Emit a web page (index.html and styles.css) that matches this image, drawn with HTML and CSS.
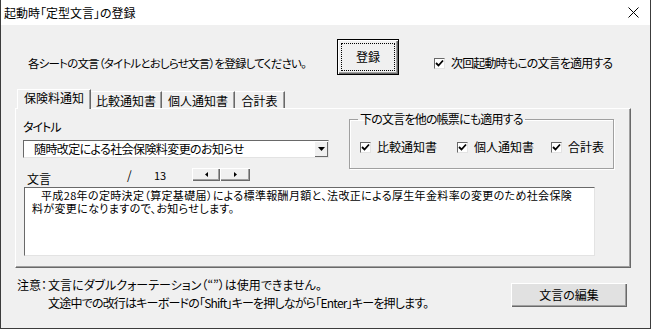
FILE: index.html
```html
<!DOCTYPE html>
<html lang="ja">
<head>
    <meta charset="UTF-8">
    <title>起動時「定型文言」の登録</title>
    <link rel="stylesheet" href="styles.css">
</head>
<body>

<div class="window">
    <div class="titlebar">
        <span class="title">起動時「定型文言」の登録</span>
        <svg class="close" width="11" height="11" viewBox="0 0 11 11">
            <path d="M0.5 0.5 L10.5 10.5 M10.5 0.5 L0.5 10.5" stroke="#000" stroke-width="1" fill="none"/>
        </svg>
    </div>

    <div class="client">
        <div class="intro-row">
            <span class="intro">各シートの文言（タイトルとおしらせ文言）を登録してください。</span>
            <button class="btn default"><span class="focus">登録</span></button>
            <label class="check top-check"><span class="cb"><svg width="9" height="9" viewBox="0 0 9 9"><path d="M1 4 L3.5 6.5 L8 1.5" stroke="#000" stroke-width="1.8" fill="none"/></svg></span>次回起動時もこの文言を適用する</label>
        </div>

        <div class="tabstrip">
            <span class="tab active t1">保険料通知</span>
            <span class="tab t2">比較通知書</span>
            <span class="tab t3">個人通知書</span>
            <span class="tab t4">合計表</span>
        </div>

        <div class="panel">
            <div class="panel-top">
                <div class="title-col">
                    <div class="label">タイトル</div>
                    <div class="combo">
                        <span class="combo-text">随時改定による社会保険料変更のお知らせ</span>
                        <span class="combo-btn"><svg width="7" height="4" viewBox="0 0 7 4"><path d="M0 0 H7 L3.5 4 Z" fill="#000"/></svg></span>
                    </div>
                </div>
                <fieldset class="group">
                    <legend>下の文言を他の帳票にも適用する</legend>
                    <div class="group-row">
                        <label class="check g1"><span class="cb"><svg width="9" height="9" viewBox="0 0 9 9"><path d="M1 4 L3.5 6.5 L8 1.5" stroke="#000" stroke-width="1.8" fill="none"/></svg></span>比較通知書</label>
                        <label class="check g2"><span class="cb"><svg width="9" height="9" viewBox="0 0 9 9"><path d="M1 4 L3.5 6.5 L8 1.5" stroke="#000" stroke-width="1.8" fill="none"/></svg></span>個人通知書</label>
                        <label class="check g3"><span class="cb"><svg width="9" height="9" viewBox="0 0 9 9"><path d="M1 4 L3.5 6.5 L8 1.5" stroke="#000" stroke-width="1.8" fill="none"/></svg></span>合計表</label>
                    </div>
                </fieldset>
            </div>

            <div class="text-head">
                <span class="label bun">文言</span>
                <span class="slash">/</span>
                <span class="count">13</span>
                <span class="spin"><svg width="3" height="5" viewBox="0 0 3 5"><path d="M3 0 V5 L0 2.5 Z" fill="#000"/></svg></span>
                <span class="spin"><svg width="3" height="5" viewBox="0 0 3 5"><path d="M0 0 V5 L3 2.5 Z" fill="#000"/></svg></span>
            </div>

            <div class="textbox">平成28年の定時決定（算定基礎届）による標準報酬月額と、法改正による厚生年金料率の変更のため社会保険<br>料が変更になりますので、お知らせします。</div>
        </div>

        <div class="notes-row">
            <div class="note">
                <span class="note-head">注意：</span>
                <div class="note-lines">
                    <div>文言にダブルクォーテーション（“”）は使用できません。</div>
                    <div class="tight">文途中での改行はキーボードの「Shift」キーを押しながら「Enter」キーを押します。</div>
                </div>
            </div>
            <button class="btn edit">文言の編集</button>
        </div>
    </div>
</div>

</body>
</html>
```

FILE: styles.css
```css
body {
    margin: 0;
    background: #fff;
    font-family: "Noto Sans CJK JP", sans-serif;
    font-size: 12px;
    line-height: 14px;
    color: #000;
    font-feature-settings: "palt";
}
.window {
    width: 651px;
    height: 329px;
    box-sizing: border-box;
    border: 1px solid #3c3c3c;
    border-top: none;
    background: #f0f0f0;
    display: flex;
    flex-direction: column;
}
.titlebar {
    height: 25px;
    background: #fff;
    display: flex;
    align-items: center;
    justify-content: space-between;
    padding-left: 3px;
}
.close {
    margin-right: 11px;
}
.client {
    display: flex;
    flex-direction: column;
    flex: 1;
}

/* top row */
.intro-row {
    height: 64px;
    box-sizing: border-box;
    padding-top: 14px;
    display: flex;
    align-items: flex-start;
}
.intro {
    margin-left: 27px;
    margin-top: 17px;
    width: 309px;
    white-space: nowrap;
    font-size: 11.5px;
    letter-spacing: -0.8px;
}
.btn {
    font: inherit;
    color: #000;
    background: #e1e1e1;
    border: none;
    padding: 0;
    box-shadow: inset 1px 1px 0 #fff, inset -1px -1px 0 #696969, inset -2px -2px 0 #a0a0a0;
    display: flex;
    align-items: center;
    justify-content: center;
}
.default {
    width: 62px;
    height: 36px;
    background: #f0f0f0;
    border: 1px solid #000;
    padding: 3px;
}
.focus {
    flex: 1;
    align-self: stretch;
    border: 1px dotted #000;
    display: flex;
    align-items: center;
    justify-content: center;
}
.check {
    display: flex;
    align-items: center;
    white-space: nowrap;
}
.cb {
    width: 11px;
    height: 11px;
    box-sizing: border-box;
    background: #fff;
    border-top: 1px solid #696969;
    border-left: 1px solid #696969;
    border-right: 1px solid #e3e3e3;
    border-bottom: 1px solid #e3e3e3;
    display: flex;
    align-items: center;
    justify-content: center;
    margin-right: 6px;
}
.top-check {
    margin-left: 35px;
    margin-top: 17px;
    letter-spacing: -0.85px;
}

/* tabs */
.tabstrip {
    display: flex;
    align-items: flex-end;
    height: 19px;
    margin-left: 16px;
}
.tab {
    height: 17px;
    box-sizing: border-box;
    display: flex;
    align-items: center;
    justify-content: center;
    border-top: 1px solid #fff;
    border-left: 1px solid #fff;
    border-right: 1px solid #696969;
    box-shadow: inset -1px 0 0 #a0a0a0;
    padding-top: 2px;
}
.tab.active {
    height: 20px;
    margin-bottom: -1px;
    background: #f0f0f0;
    position: relative;
    z-index: 1;
    padding-top: 0;
    padding-bottom: 3px;
}
.t1 { width: 74px; }
.t2 { width: 71px; border-left: none; }
.t3 { width: 73px; border-left: none; }
.t4 { width: 50px; border-left: none; }

.panel {
    margin-left: 14px;
    width: 616px;
    height: 160px;
    box-sizing: border-box;
    border-top: 1px solid #fff;
    border-left: 1px solid #fff;
    border-right: 1px solid #696969;
    border-bottom: 1px solid #696969;
    box-shadow: inset -1px -1px 0 #a0a0a0;
    display: flex;
    flex-direction: column;
}
.panel-top {
    display: flex;
    align-items: flex-start;
    margin-top: 3px;
}
.title-col {
    margin-left: 7px;
    margin-top: 8px;
    width: 306px;
}
.title-col .label {
    letter-spacing: -1px;
}
.combo {
    margin-top: 6px;
    height: 18px;
    box-sizing: border-box;
    background: #fff;
    border-top: 1px solid #696969;
    border-left: 1px solid #696969;
    border-right: 1px solid #e3e3e3;
    border-bottom: 1px solid #e3e3e3;
    display: flex;
    align-items: center;
}
.combo-text {
    flex: 1;
    padding-left: 10px;
    white-space: nowrap;
    letter-spacing: -0.6px;
}
.combo-btn {
    width: 14px;
    height: 16px;
    box-sizing: border-box;
    background: #f0f0f0;
    box-shadow: inset 1px 1px 0 #fff, inset -1px -1px 0 #696969;
    display: flex;
    align-items: center;
    justify-content: center;
}
.group {
    margin: 0 0 0 20px;
    width: 265px;
    height: 57px;
    box-sizing: border-box;
    padding: 0 8px;
    border: 1px solid #a0a0a0;
    box-shadow: 1px 1px 0 #fff, inset 1px 1px 0 #fff;
}
.group legend {
    padding: 0 2px;
    line-height: 14px;
    letter-spacing: -0.8px;
}
.group-row {
    display: flex;
    margin-top: 14px;
    margin-left: 2px;
}
.g1 { width: 97px; }
.g2 { width: 94px; }

.text-head {
    display: flex;
    align-items: flex-start;
    margin-top: -1px;
    height: 18px;
}
.bun {
    margin-left: 11px;
    margin-top: 4px;
    width: 100px;
}
.slash {
    width: 27px;
}
.count {
    width: 38px;
    font-size: 11px;
}
.spin {
    width: 28px;
    height: 13px;
    box-sizing: border-box;
    background: #f0f0f0;
    box-shadow: inset 1px 1px 0 #fff, inset -1px -1px 0 #696969, inset -2px -2px 0 #a0a0a0;
    display: flex;
    align-items: center;
    justify-content: center;
}
.spin + .spin {
    width: 30px;
}
.textbox {
    margin-left: 8px;
    margin-top: 1px;
    width: 571px;
    height: 69px;
    box-sizing: border-box;
    background: #fff;
    border-top: 1px solid #696969;
    border-left: 1px solid #696969;
    border-right: 1px solid #e3e3e3;
    border-bottom: 1px solid #e3e3e3;
    padding: 1px 0 0 7px;
    font-size: 11px;
    letter-spacing: 0.35px;
    line-height: 13px;
    text-indent: 9px;
    white-space: nowrap;
}

/* bottom notes */
.notes-row {
    display: flex;
    align-items: flex-start;
    margin-top: 8px;
    line-height: 18px;
}
.note {
    display: flex;
    margin-left: 16px;
    white-space: nowrap;
}
.note-head {
    width: 31px;
}
.tight {
    letter-spacing: -0.8px;
}
.edit {
    margin-left: auto;
    margin-right: 23px;
    margin-top: 7px;
    width: 116px;
    height: 24px;
}
```
